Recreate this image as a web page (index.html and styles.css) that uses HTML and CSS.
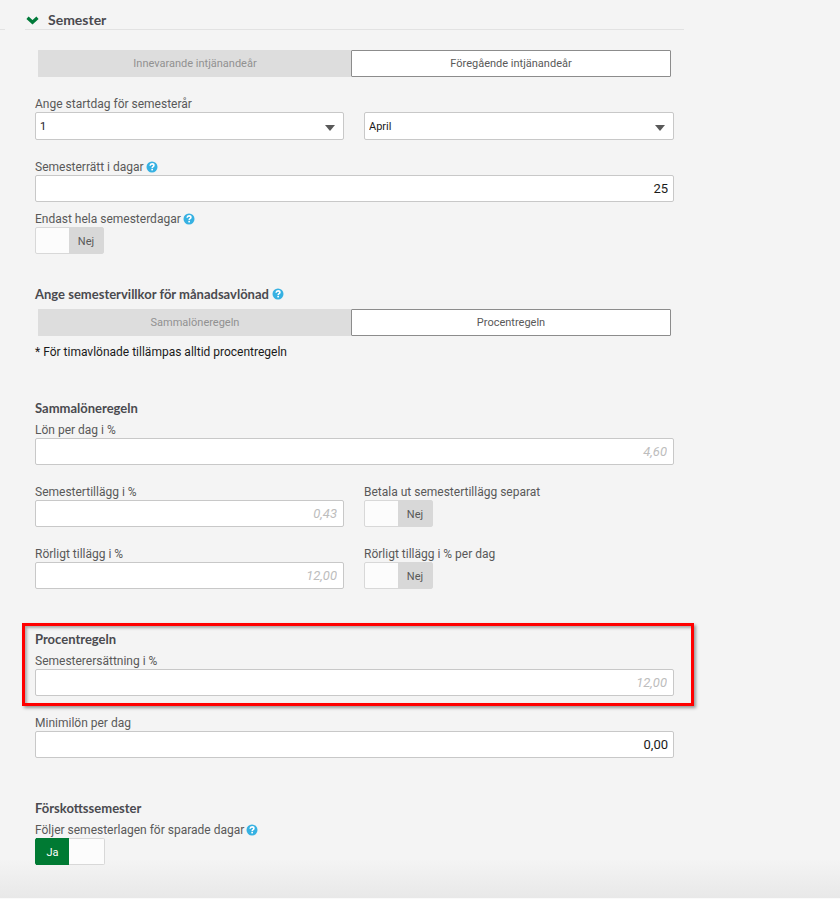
FILE: index.html
```html
<!DOCTYPE html>
<html lang="sv">
<head>
<meta charset="utf-8">
<meta name="viewport" content="width=device-width, initial-scale=1">
<title>Semester</title>
<link rel="stylesheet" href="styles.css">
</head>
<body>
<svg class="sprite" aria-hidden="true">
  <symbol id="help" viewBox="0 0 12 12">
    <circle cx="6" cy="6" r="5.500" fill="#36b1e2"/>
    <path d="M4.100 4.700C4.200 3.500 5 2.900 6.100 2.900c1.100 0 1.800.6 1.800 1.500 0 1.300-1.700 1.300-1.700 2.600" fill="none" stroke="#fff" stroke-width="1.600"/>
    <rect x="5.300" y="7.800" width="1.700" height="1.600" fill="#fff"/>
  </symbol>
</svg>
<div class="page">
  <div class="side"></div>
  <main class="panel">
    <h1 class="title">
      <svg class="chevron" viewBox="0 0 13 9" aria-hidden="true"><path d="M1.500 1.800 6.500 6.300l5-4.500" fill="none" stroke="#007a3a" stroke-width="3.200"/></svg>
      Semester
    </h1>
    <form class="content">
      <div class="segments">
        <button type="button" class="segment off">Innevarande intjänandeår</button>
        <button type="button" class="segment on">Föregående intjänandeår</button>
      </div>

      <div class="row">
        <div class="field">
          <label for="day">Ange startdag för semesterår</label>
          <select id="day" class="control"><option>1</option></select>
        </div>
        <div class="field bottom">
          <select id="month" class="control" aria-label="Månad"><option>April</option></select>
        </div>
      </div>

      <div class="field">
        <div class="caption"><label for="days">Semesterrätt i dagar</label><svg class="help"><use href="#help"/></svg></div>
        <input id="days" class="control number" type="text" value="25">
      </div>

      <div class="field close">
        <div class="caption"><label for="whole">Endast hela semesterdagar</label><svg class="help"><use href="#help"/></svg></div>
        <label class="switch"><input id="whole" type="checkbox"><span class="knob"></span><span class="state">Nej</span></label>
      </div>

      <section class="group terms">
        <h2>Ange semestervillkor för månadsavlönad<svg class="help"><use href="#help"/></svg></h2>
        <div class="segments">
          <button type="button" class="segment off">Sammalöneregeln</button>
          <button type="button" class="segment on">Procentregeln</button>
        </div>
        <p class="note">* För timavlönade tillämpas alltid procentregeln</p>
      </section>

      <section class="group">
        <h2>Sammalöneregeln</h2>
        <div class="field first">
          <label for="pay">Lön per dag i %</label>
          <input id="pay" class="control number" type="text" placeholder="4,60">
        </div>
        <div class="row">
          <div class="field">
            <label for="extra">Semestertillägg i %</label>
            <input id="extra" class="control number" type="text" placeholder="0,43">
          </div>
          <div class="field">
            <label for="separate">Betala ut semestertillägg separat</label>
            <label class="switch"><input id="separate" type="checkbox"><span class="knob"></span><span class="state">Nej</span></label>
          </div>
        </div>
        <div class="row">
          <div class="field">
            <label for="variable">Rörligt tillägg i %</label>
            <input id="variable" class="control number" type="text" placeholder="12,00">
          </div>
          <div class="field">
            <label for="perday">Rörligt tillägg i % per dag</label>
            <label class="switch"><input id="perday" type="checkbox"><span class="knob"></span><span class="state">Nej</span></label>
          </div>
        </div>
      </section>

      <section class="group marked">
        <h2>Procentregeln</h2>
        <div class="field first">
          <label for="comp">Semesterersättning i %</label>
          <input id="comp" class="control number" type="text" placeholder="12,00">
        </div>
      </section>

      <div class="field">
        <label for="min">Minimilön per dag</label>
        <input id="min" class="control number" type="text" value="0,00">
      </div>

      <section class="group">
        <h2>Förskottssemester</h2>
        <div class="field first">
          <div class="caption"><label for="saved">Följer semesterlagen för sparade dagar</label><svg class="help"><use href="#help"/></svg></div>
          <label class="switch checked"><input id="saved" type="checkbox" checked><span class="state">Ja</span><span class="knob"></span></label>
        </div>
      </section>
    </form>
  </main>
</div>
</body>
</html>
```
FILE: styles.css
```css
* {
  box-sizing: border-box;
}

body {
  margin: 0;
  min-height: 100vh;
  border-bottom: 1px solid #fafafa;
  background: linear-gradient(to top, #e8e8e8, #f4f4f4 40px);
  color: #595959;
  font: 12px/16px Roboto, "Liberation Sans", sans-serif;
}

.sprite {
  display: none;
}

.page {
  display: flex;
  gap: 20px;
  padding-bottom: 32px;
}

.side {
  width: 5px;
  height: 30px;
  border-bottom: 1px solid #e2e2e2;
}

.panel {
  flex: 1;
  max-width: 659px;
}

.title {
  display: flex;
  align-items: center;
  gap: 9px;
  height: 30px;
  margin: 0;
  padding: 12px 1px 1px;
  border-bottom: 1px solid #e2e2e2;
  color: #4a4a4f;
  font: bold 14px/16px Lato, sans-serif;
}

.chevron {
  width: 13px;
  height: 9px;
}

.content {
  margin: 20px 10px 0;
}

.segments {
  display: flex;
  margin: 0 3px;
}

.segment {
  flex: 1 1 320px;
  height: 27px;
  padding: 0;
  border: 1px solid #8c8c8c;
  border-radius: 1px;
  background: #fff;
  color: #595959;
  font: 11px/16px Roboto, sans-serif;
}

.segment.off {
  flex-basis: 313px;
  border-color: #ddd;
  border-right: 0;
  background: #ddd;
  color: #919191;
}

.row {
  display: grid;
  grid-template-columns: 309fr 310fr;
  gap: 20px;
  margin-top: 19px;
}

.field {
  display: flex;
  flex-direction: column;
  align-items: flex-start;
  margin-top: 19px;
}

.row .field {
  margin-top: 0;
}

.field.close {
  margin-top: 9px;
}

.field.first {
  margin-top: 4px;
}

.field.bottom {
  justify-content: flex-end;
}

.caption {
  display: flex;
  align-items: center;
  gap: 2px;
}

.help {
  width: 12px;
  height: 12px;
}

.control {
  width: 100%;
  height: 27px;
  padding: 0 5px;
  border: 1px solid #c8c8c8;
  border-radius: 2px;
  background: #fff;
  color: #1a1a1a;
  font: 13px/16px Roboto, sans-serif;
}

select.control {
  height: 28px;
  padding: 1px 4px 0;
  appearance: none;
  background: #fff url("data:image/svg+xml,%3Csvg xmlns='http://www.w3.org/2000/svg' width='10' height='6'%3E%3Cpath d='M0 0h10L5 6z' fill='%23595959'/%3E%3C/svg%3E") no-repeat right 8px top 12px;
  font-size: 11px;
}

.number {
  text-align: right;
}

.number:placeholder-shown {
  padding-right: 6px;
}

.number::placeholder {
  color: #bdbdbd;
  font-style: italic;
}

.switch {
  position: relative;
  display: flex;
  width: 69px;
  height: 27px;
  border: 1px solid #d8d8d8;
  border-radius: 2px;
  background: #fcfcfc;
  font-size: 11px;
  line-height: 27px;
  text-align: center;
}

.switch input {
  position: absolute;
  inset: 0;
  width: 100%;
  height: 100%;
  margin: 0;
  opacity: 0;
}

.knob {
  flex: 1;
}

.state {
  width: 34px;
  height: 25px;
  background: #d8d8d8;
}

.checked {
  width: 70px;
  border-left-color: #007a33;
}

.checked .state {
  width: 33px;
  height: 27px;
  margin: -1px 0;
  background: #007a33;
  color: #fff;
  line-height: 29px;
}

.group {
  margin-top: 40px;
}

.group.terms {
  margin-top: 30px;
}

h2 {
  display: flex;
  align-items: center;
  gap: 3px;
  margin: 0;
  color: #4a4a4f;
  font: bold 13px/20px Lato, sans-serif;
}

.terms .segments {
  margin-top: 5px;
}

.note {
  margin: 8px 0 -2px;
  color: #1a1a1a;
}

.marked {
  position: relative;
}

.marked::after {
  content: "";
  position: absolute;
  inset: -6px -20px -10px -13px;
  border: 3px solid #f00;
  box-shadow: 2px 2px 3px #999, inset 2px 2px 3px #aaa;
  pointer-events: none;
}
```
